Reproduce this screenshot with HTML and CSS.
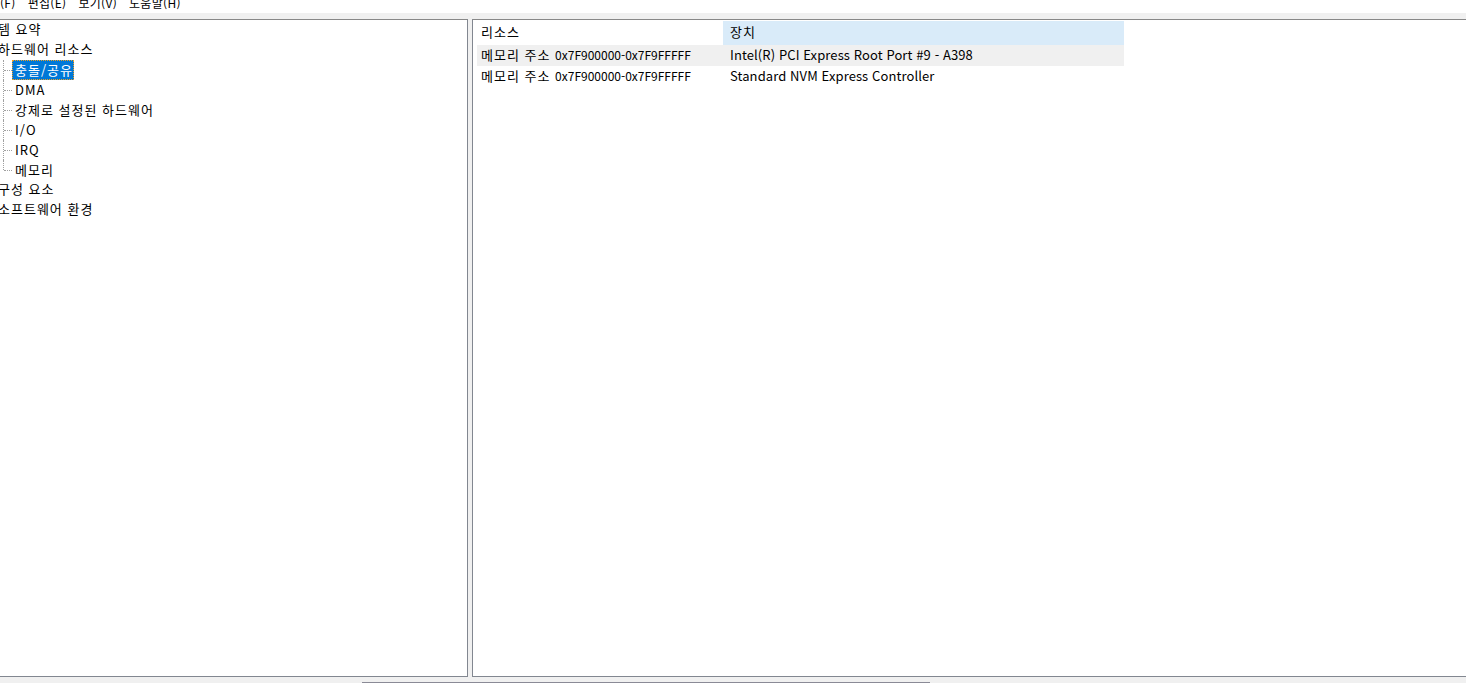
FILE: index.html
```html
<!DOCTYPE html>
<html lang="ko">
<head>
    <meta charset="UTF-8">
    <meta name="viewport" content="width=device-width, initial-scale=1.0">
    <title>시스템 정보</title>
    <link rel="stylesheet" href="styles.css">
</head>
<body>
    <div class="menubar">
        <span class="menu-item first">(F)</span>
        <span class="menu-item">편집(E)</span>
        <span class="menu-item">보기(V)</span>
        <span class="menu-item">도움말(H)</span>
    </div>
    <div class="band"></div>
    <div class="panes">
        <div class="tree-pane">
            <ul class="tree">
                <li class="node">템 요약</li>
                <li class="node">하드웨어 리소스</li>
                <li>
                    <ul class="children">
                        <li class="child"><span class="label selected">충돌/공유</span></li>
                        <li class="child"><span class="label">DMA</span></li>
                        <li class="child"><span class="label">강제로 설정된 하드웨어</span></li>
                        <li class="child"><span class="label">I/O</span></li>
                        <li class="child"><span class="label">IRQ</span></li>
                        <li class="child"><span class="label">메모리</span></li>
                    </ul>
                </li>
                <li class="node">구성 요소</li>
                <li class="node">소프트웨어 환경</li>
            </ul>
        </div>
        <div class="splitter"></div>
        <div class="list-pane">
            <div class="list">
                <div class="row header">
                    <div class="col res">리소스</div>
                    <div class="col dev sorted"><span class="ko">장치</span></div>
                </div>
                <div class="row hot">
                    <div class="col res">메모리 주소 <span class="addr">0x7F900000-0x7F9FFFFF</span></div>
                    <div class="col dev">Intel(R) PCI Express Root Port #9 - A398</div>
                </div>
                <div class="row">
                    <div class="col res">메모리 주소 <span class="addr">0x7F900000-0x7F9FFFFF</span></div>
                    <div class="col dev">Standard NVM Express Controller</div>
                </div>
            </div>
        </div>
    </div>
    <div class="statusbar">
        <div class="thumb"></div>
    </div>
</body>
</html>
```

FILE: styles.css
```css
* {
    margin: 0;
    padding: 0;
    box-sizing: border-box;
}
html, body {
    height: 100%;
}
body {
    background-color: #f0f0f0;
    font-family: "Noto Sans CJK KR", "Noto Sans", sans-serif;
    font-size: 13px;
    letter-spacing: 1px;
    color: #000;
    overflow: hidden;
}
.menubar {
    height: 13px;
    background-color: #fff;
    overflow: hidden;
    display: flex;
    font-size: 12px;
    letter-spacing: 0.3px;
    line-height: 20px;
}
.menu-item {
    margin-top: -7px;
    padding: 0 6px;
    white-space: nowrap;
}
.menu-item.first {
    padding-left: 0;
    margin-left: 0;
}
.band {
    height: 6px;
    background-color: #f0f0f0;
}
.panes {
    display: flex;
    height: 658px;
}
.tree-pane {
    width: 468px;
    background-color: #fff;
    border-top: 1px solid #888;
    border-right: 1px solid #828790;
    border-bottom: 1px solid #828790;
    overflow: hidden;
}
.splitter {
    width: 4px;
}
.list-pane {
    flex: 1;
    background-color: #fff;
    border-top: 1px solid #888;
    border-left: 1px solid #828790;
    border-bottom: 1px solid #828790;
    padding: 1px 0 0 4px;
    overflow: hidden;
}
ul {
    list-style: none;
}
.node {
    height: 20px;
    line-height: 18px;
    margin-left: -2px;
    white-space: nowrap;
}
.children {
    margin-left: 3px;
}
.child {
    position: relative;
    height: 20px;
    line-height: 17px;
    padding-left: 9px;
}
.child::before {
    content: "";
    position: absolute;
    left: 0;
    top: 0;
    bottom: 0;
    border-left: 1px dotted #a0a0a0;
}
.child:last-child::before {
    bottom: 10px;
}
.child::after {
    content: "";
    position: absolute;
    left: 1px;
    top: 10px;
    width: 8px;
    border-top: 1px dotted #a0a0a0;
}
.label {
    display: inline-block;
    height: 20px;
    padding: 0 0 0 2px;
    border: 1px solid transparent;
    white-space: nowrap;
}
.label.selected {
    background-color: #0078d7;
    color: #fff;
    border: 1px dotted #f0a020;
}
.list {
    width: 647px;
}
.row {
    display: flex;
    height: 21px;
    line-height: 20px;
    white-space: nowrap;
}
.row.header {
    height: 24px;
    line-height: 22px;
}
.row.hot {
    background-color: #f0f0f0;
}
.col.res {
    width: 246px;
    padding-left: 4px;
}
.col.dev {
    flex: 1;
    padding-left: 7px;
    letter-spacing: 0.1px;
}
.col.dev .ko {
    letter-spacing: 1px;
}
.addr {
    font-size: 12px;
    letter-spacing: 0;
}
.col.sorted {
    background-color: #d9ebf9;
}
.statusbar {
    height: 6px;
    padding-left: 362px;
}
.thumb {
    width: 568px;
    height: 1px;
    margin-top: 5px;
    background-color: #8a8a96;
}
```
